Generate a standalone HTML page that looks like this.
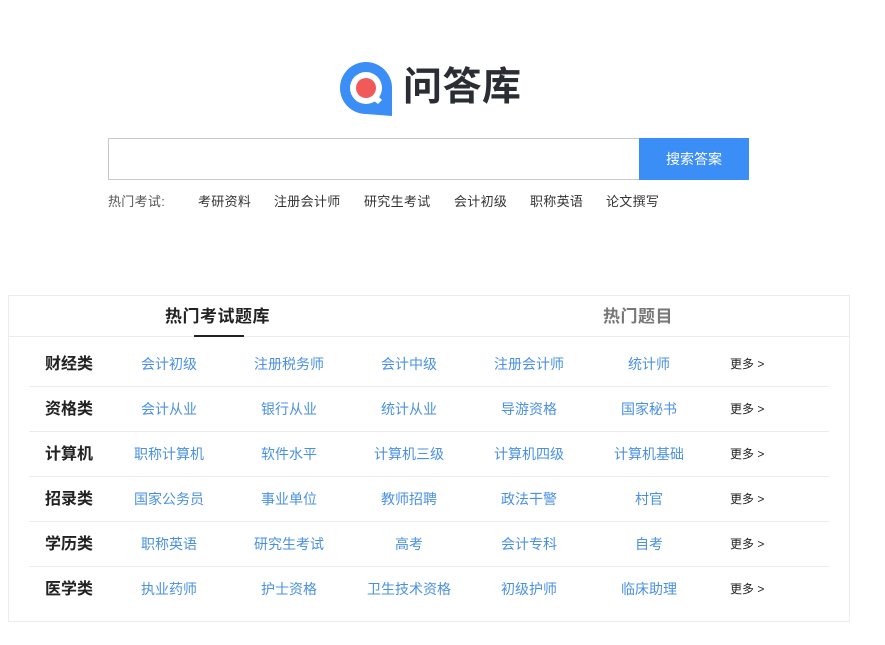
<!DOCTYPE html>
<html><head><meta charset="utf-8"><style>
*{margin:0;padding:0;box-sizing:border-box}
body{width:885px;height:645px;background:#fff;font-family:"Liberation Sans","Noto Sans CJK SC",sans-serif;position:relative;overflow:hidden}
.a{position:absolute}
.logo-t{left:403px;top:61px;font-size:39px;font-weight:bold;color:#2a2d33;letter-spacing:0.5px;line-height:54px}
.search{left:108px;top:138px;width:532px;height:42px;border:1px solid #c9c9c9;border-right:none}
.btn{left:639px;top:138px;width:110px;height:42px;background:#3a8ef6;color:#fff;font-size:14px;text-align:center;line-height:42px}
.hot{top:193px;font-size:13px;color:#333;line-height:18px;letter-spacing:0.3px}
.box{left:8px;top:295px;width:842px;height:327px;border:1px solid #ececec}
.tab{top:305px;font-size:17px;font-weight:bold;line-height:24px;letter-spacing:0.5px}
.row{left:29px;width:800px;height:45px;border-bottom:1px solid #ececec}
.c{position:absolute;top:0;line-height:45px;font-size:14px;color:#4a90e2;text-align:center;width:120px}
.lab{color:#222;font-size:16px;font-weight:bold;width:80px;left:0}
.more{position:absolute;left:701px;line-height:45px;font-size:12px;color:#222}
</style></head><body>
<svg class="a" style="left:338px;top:60px" width="58" height="58" viewBox="0 0 58 58">
<path d="M28 2A26 26 0 1 0 28 54L54 56L54 28A26 26 0 0 0 28 2Z" fill="#3a8ef6"/>
<circle cx="28" cy="28" r="16" fill="#fff"/>
<circle cx="28" cy="28" r="10" fill="#f25a5a"/>
<path d="M32 38L40 44L44 40L38 34Z" fill="#fff"/>
</svg>
<div class="a logo-t">问答库</div>
<div class="a search"></div>
<div class="a btn">搜索答案</div>
<div class="a hot" style="left:108px;color:#555">热门考试:</div>
<div class="a hot" style="left:198px">考研资料</div>
<div class="a hot" style="left:274px">注册会计师</div>
<div class="a hot" style="left:364px">研究生考试</div>
<div class="a hot" style="left:454px">会计初级</div>
<div class="a hot" style="left:530px">职称英语</div>
<div class="a hot" style="left:606px">论文撰写</div>
<div class="a box"></div>
<div class="a" style="left:9px;top:336px;width:840px;border-top:1px solid #ececec"></div>
<div class="a tab" style="left:165px;color:#222">热门考试题库</div>
<div class="a" style="left:194px;top:335px;width:50px;height:2px;background:#222"></div>
<div class="a tab" style="left:603px;color:#777">热门题目</div>

<div class="a row" style="top:342px"><div class="c lab">财经类</div><div class="c" style="left:80px">会计初级</div><div class="c" style="left:200px">注册税务师</div><div class="c" style="left:320px">会计中级</div><div class="c" style="left:440px">注册会计师</div><div class="c" style="left:560px">统计师</div><div class="more">更多 &gt;</div></div>
<div class="a row" style="top:387px"><div class="c lab">资格类</div><div class="c" style="left:80px">会计从业</div><div class="c" style="left:200px">银行从业</div><div class="c" style="left:320px">统计从业</div><div class="c" style="left:440px">导游资格</div><div class="c" style="left:560px">国家秘书</div><div class="more">更多 &gt;</div></div>
<div class="a row" style="top:432px"><div class="c lab">计算机</div><div class="c" style="left:80px">职称计算机</div><div class="c" style="left:200px">软件水平</div><div class="c" style="left:320px">计算机三级</div><div class="c" style="left:440px">计算机四级</div><div class="c" style="left:560px">计算机基础</div><div class="more">更多 &gt;</div></div>
<div class="a row" style="top:477px"><div class="c lab">招录类</div><div class="c" style="left:80px">国家公务员</div><div class="c" style="left:200px">事业单位</div><div class="c" style="left:320px">教师招聘</div><div class="c" style="left:440px">政法干警</div><div class="c" style="left:560px">村官</div><div class="more">更多 &gt;</div></div>
<div class="a row" style="top:522px"><div class="c lab">学历类</div><div class="c" style="left:80px">职称英语</div><div class="c" style="left:200px">研究生考试</div><div class="c" style="left:320px">高考</div><div class="c" style="left:440px">会计专科</div><div class="c" style="left:560px">自考</div><div class="more">更多 &gt;</div></div>
<div class="a row" style="top:567px;border-bottom:none"><div class="c lab">医学类</div><div class="c" style="left:80px">执业药师</div><div class="c" style="left:200px">护士资格</div><div class="c" style="left:320px">卫生技术资格</div><div class="c" style="left:440px">初级护师</div><div class="c" style="left:560px">临床助理</div><div class="more">更多 &gt;</div></div>
</body></html>
